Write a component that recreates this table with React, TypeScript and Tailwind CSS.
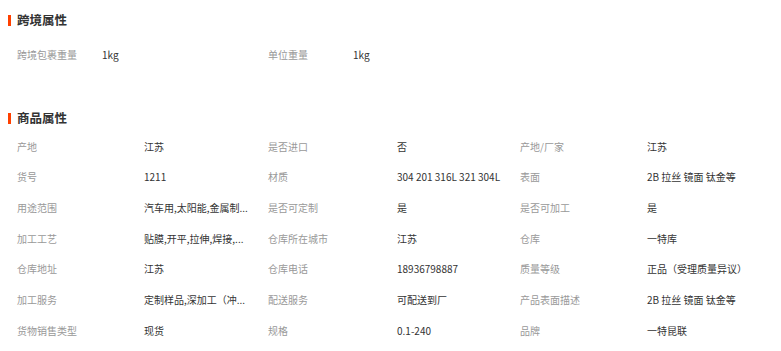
import React from "react";

type Attr = { label: string; value: string };

const crossBorder: Attr[] = [
  { label: "跨境包裹重量", value: "1kg" },
  { label: "单位重量", value: "1kg" },
];

// long values are shown shortened, as the page does
const productAttrs: Attr[] = [
  { label: "产地", value: "江苏" },
  { label: "是否进口", value: "否" },
  { label: "产地/厂家", value: "江苏" },
  { label: "货号", value: "1211" },
  { label: "材质", value: "304 201 316L 321 304L" },
  { label: "表面", value: "2B 拉丝 镜面 钛金等" },
  { label: "用途范围", value: "汽车用,太阳能,金属制..." },
  { label: "是否可定制", value: "是" },
  { label: "是否可加工", value: "是" },
  { label: "加工工艺", value: "贴膜,开平,拉伸,焊接,..." },
  { label: "仓库所在城市", value: "江苏" },
  { label: "仓库", value: "一特库" },
  { label: "仓库地址", value: "江苏" },
  { label: "仓库电话", value: "18936798887" },
  { label: "质量等级", value: "正品（受理质量异议）" },
  { label: "加工服务", value: "定制样品,深加工（冲..." },
  { label: "配送服务", value: "可配送到厂" },
  { label: "产品表面描述", value: "2B 拉丝 镜面 钛金等" },
  { label: "货物销售类型", value: "现货" },
  { label: "规格", value: "0.1-240" },
  { label: "品牌", value: "一特昆联" },
];

function SectionTitle({ title }: { title: string }) {
  return (
    <div className="flex h-5 items-center">
      <span className="ml-2 h-[11px] w-[3px] bg-[#ff4000]" />
      <span className="ml-[6px] text-[12.5px] font-bold text-[#333]">{title}</span>
    </div>
  );
}

export default function App() {
  return (
    <div
      className="h-[351px] w-[781px] overflow-hidden bg-white"
      style={{ fontFamily: '"Noto Sans CJK SC", "Liberation Sans", sans-serif' }}
    >
      <div className="pt-[10px]">
        <SectionTitle title="跨境属性" />
        <div className="mt-[9px] grid grid-cols-[85px_166px_85px_1fr] pl-[17px] text-[10px]">
          {crossBorder.map((a) => (
            <React.Fragment key={a.label}>
              <div className="flex h-[31px] items-center text-[#999]">{a.label}</div>
              <div className="flex h-[31px] items-center text-[#333]">{a.value}</div>
            </React.Fragment>
          ))}
        </div>
      </div>

      <div className="mt-[38px]">
        <SectionTitle title="商品属性" />
        <div className="mt-[3px] grid grid-cols-[127px_124px_129px_123px_127px_1fr] pl-[17px] text-[10px]">
          {productAttrs.map((a) => (
            <React.Fragment key={a.label}>
              <div className="flex h-[30.67px] items-center whitespace-nowrap text-[#999]">{a.label}</div>
              <div className="flex h-[30.67px] items-center whitespace-nowrap text-[#333]">{a.value}</div>
            </React.Fragment>
          ))}
        </div>
      </div>
    </div>
  );
}
